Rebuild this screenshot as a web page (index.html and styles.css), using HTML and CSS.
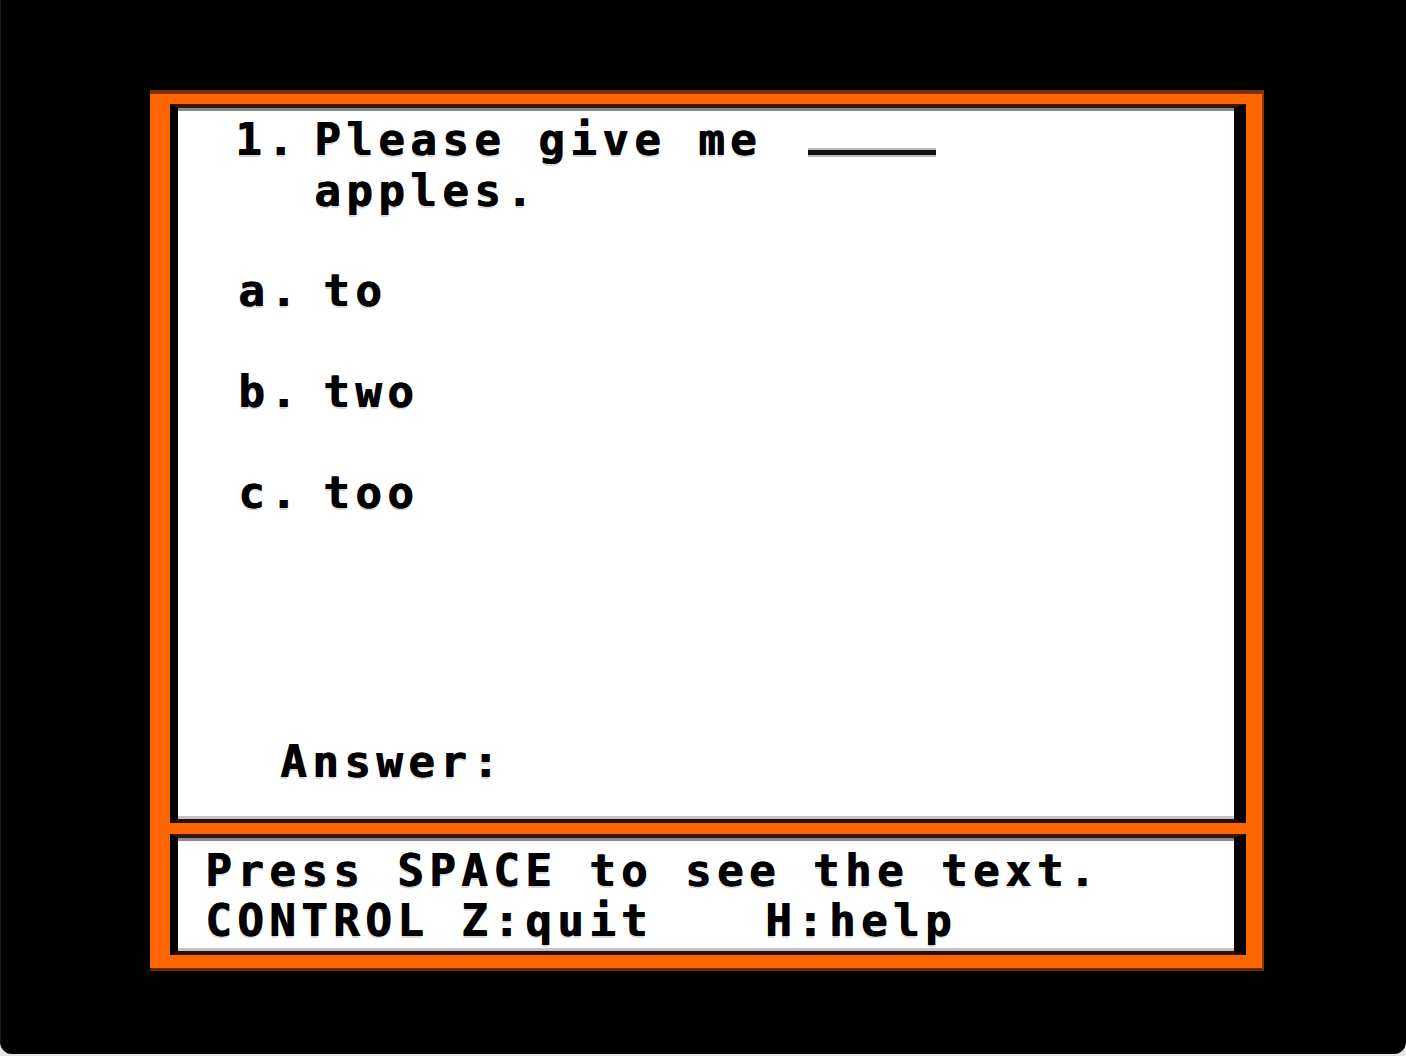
FILE: index.html
```html
<!DOCTYPE html>
<html lang="en">
<head>
<meta charset="utf-8">
<title>Quiz</title>
<link rel="stylesheet" href="styles.css">
</head>
<body>
<div class="screen">
  <div class="frame">
    <div class="panel main">
      <div class="question">
        <span class="num">1.</span>
        <div class="qtext">
          <div class="line">Please give me <span class="blank"></span></div>
          <div class="line">apples.</div>
        </div>
      </div>
      <div class="option"><span class="lbl">a.</span><span>to</span></div>
      <div class="option"><span class="lbl">b.</span><span>two</span></div>
      <div class="option"><span class="lbl">c.</span><span>too</span></div>
      <div class="answer">Answer:</div>
    </div>
    <div class="panel status">
      <div class="line">Press SPACE to see the text.</div>
      <div class="line row"><span>CONTROL Z:quit</span><span class="help">H:help</span></div>
    </div>
  </div>
</div>
</body>
</html>
```

FILE: styles.css
```css
html {
  background: #e6e6e6;
}
body {
  margin: 0;
}
.screen {
  height: 1054px;
  background: #000;
  border-radius: 0 0 12px 12px;
  overflow: hidden;
  padding-top: 90px;
  box-sizing: border-box;
  border-left: 1px solid #1c1c1c;
}
.frame {
  margin-left: 149px;
  width: 1114px;
  box-sizing: border-box;
  background: #ff6600;
  border-top: 4px solid #7a3000;
  border-bottom: 3px solid #6a2a00;
  border-right: 2px solid #8a3a00;
  padding: 10px 16px 13px 20px;
  display: flex;
  flex-direction: column;
  gap: 11px;
}
.panel {
  box-sizing: border-box;
  width: 1076px;
  background: #fff;
  border-style: solid;
  border-color: #3a1600 #000 #2a1000 #000;
  border-width: 4px 12px 4px 8px;
  box-shadow: inset 0 3px 0 #8a8a8a, inset 0 -3px 0 #c4c4c4;
  font-family: "DejaVu Sans Mono", "Liberation Mono", monospace;
  font-weight: bold;
  font-size: 44px;
  letter-spacing: 5.5px;
  color: #000;
  text-shadow: 1px 0 0 #000, 0 2px 0 rgba(0, 0, 0, 0.16);
}
.main {
  height: 719px;
  padding: 6px 0 0 57px;
  line-height: 51px;
}
.question {
  display: flex;
}
.num {
  width: 79px;
  flex: none;
}
.line {
  white-space: pre;
}
.blank {
  display: inline-block;
  width: 128px;
  height: 0;
  border-bottom: 5px solid #111;
  margin-left: 14px;
  box-shadow: 0 2px 0 #bdbdbd, 0 -2px 0 #bdbdbd;
}
.option {
  display: flex;
  padding-left: 3px;
  margin-top: 50px;
}
.question + .option {
  margin-top: 49px;
}
.lbl {
  width: 85px;
  flex: none;
}
.answer {
  margin-top: 218px;
  padding-left: 45px;
}
.status {
  height: 121px;
  padding: 8px 0 0 27px;
  line-height: 50px;
}
.row {
  display: flex;
}
.help {
  margin-left: 112px;
}
```
